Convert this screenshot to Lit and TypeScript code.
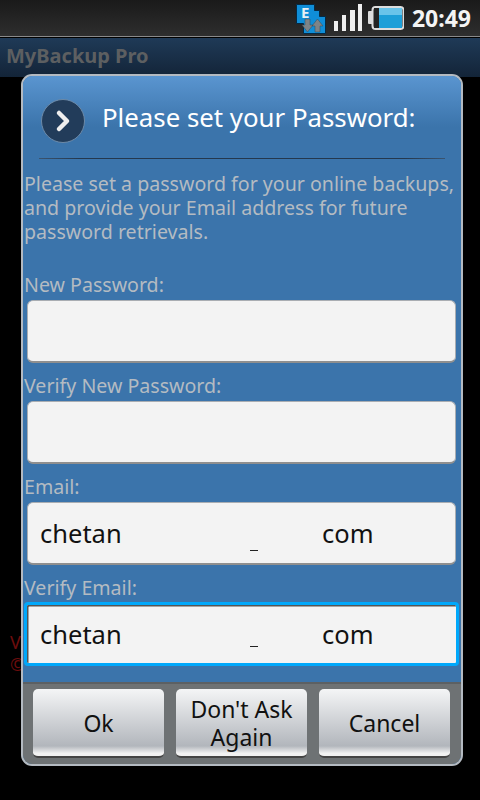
import { LitElement, html, css } from "lit";
import { customElement } from "lit/decorators.js";

@customElement("app-root")
export class AppRoot extends LitElement {
  static styles = css`
    :host { display: block; width: 480px; height: 800px; position: relative; overflow: hidden; background: #000; font-family: "Noto Sans", "Open Sans", sans-serif; }
    .status { height: 37px; box-sizing: border-box; background: linear-gradient(#1a1a1a, #2e2e2e); border-bottom: 1px solid #8a8a8a; display: flex; justify-content: flex-end; align-items: center; padding-right: 9px; }
    .status svg { display: block; flex: none; }
    .net { margin-right: 7px; }
    .sig { margin-right: 5px; }
    .time { color: #f4f4f4; font: bold 23px "Noto Sans", sans-serif; margin-left: 8px; margin-top: -1px; }
    .appbar { height: 39px; margin-top: 1px; background: linear-gradient(#1f3a57, #132438); color: #5d5f61; font-weight: bold; font-size: 20px; line-height: 36px; padding-left: 6px; }
    .behind { position: absolute; left: 10px; top: 631px; color: #6d0d0d; font-size: 18px; line-height: 22px; }
    .dialog { position: absolute; left: 21px; top: 74px; width: 442px; height: 692px; box-sizing: border-box; border: 2px solid #b4bac1; border-radius: 11px; overflow: hidden; background: #3b74ab; display: flex; flex-direction: column; }
    .head { height: 82px; flex: none; box-sizing: border-box; background: linear-gradient(#5a95d0, #3b74ab 62%); display: flex; align-items: center; padding: 7px 0 0 18px; gap: 17px; }
    .head span { color: #fff; font-size: 25.800px; margin-top: -7px; }
    .rule { flex: none; height: 1px; margin: 0 16px; background: linear-gradient(90deg, #3a5470, #24384e 10%, #24384e 90%, #3a5470); }
    .msg { flex: none; margin: 13px 0 0 1px; color: #b4bbc2; font-size: 19.600px; line-height: 24px; white-space: nowrap; height: 90px; }
    .fields { flex: 1; padding: 0 5px 0 4px; }
    label { display: block; color: #b4bbc2; font-size: 19.600px; height: 38px; line-height: 46px; margin-left: -3px; }
    .input { height: 63px; box-sizing: border-box; background: #f3f3f3; border-radius: 6px; border: 1px solid #a9adb2; border-bottom: 2px solid #8f8f8f; display: flex; align-items: center; padding: 0 12px; color: #111; font-size: 25.500px; position: relative; }
    .input .a { flex: none; width: 282px; }
    .input i { position: absolute; left: 222px; top: 47px; width: 8px; height: 1px; background: #222; }
    .focus { margin: -1px -3px 0; height: 64px; border: 3px solid #00a8fb; border-radius: 4px; background: #f3f3f3; box-shadow: inset 1.500px 1.500px 0 #555; padding: 0 13px; }
    .focus i { left: 223px; top: 41px; }
    .bar { flex: none; height: 82px; box-sizing: border-box; background: #6e7274; border-top: 2px solid #5c6063; display: flex; gap: 12px; padding: 5px 11px 0 10px; }
    .btn { flex: 1; height: 69px; box-sizing: border-box; border-radius: 5px; padding-top: 1px; background: linear-gradient(#f4f5f6, #b2b6bc 85%, #f2f2f2 96%); border-bottom: 2px solid #444; display: flex; align-items: center; justify-content: center; text-align: center; color: #111; font-size: 23px; line-height: 28px; }
  `;

  render() {
    return html`
      <div class="status">
        <svg class="net" width="31" height="31" viewBox="0 0 31 31">
          <path d="M.5 1.500h18v6h5v6h6v17h-22v-10h-7z" fill="#0f8ed8" stroke="#052a44" stroke-width="1"/>
          <text x="5" y="15" fill="#e8f0f4" font-family="Noto Sans" font-weight="bold" font-size="15">E</text>
          <path d="M9 16h5v6h3l-5.500 7-5.500-7h3zM24 29h-5v-6h-3l5.500-7 5.500 7h-3z" fill="#7d8488" stroke="#3b4a52" stroke-width=".5"/>
        </svg>
        <svg class="sig" width="29" height="28" viewBox="0 0 29 28">
          <rect x="0" y="17" width="4" height="10" fill="#eee"/>
          <rect x="8" y="11" width="4" height="16" fill="#eee"/>
          <rect x="16" y="6" width="5" height="21" fill="#eee"/>
          <rect x="24" y="0" width="4" height="27" fill="#eee"/>
        </svg>
        <svg width="36" height="24" viewBox="0 0 36 24">
          <rect x="0" y="5" width="5" height="13" rx="1" fill="#ddd"/>
          <rect x="4.500" y="1" width="31" height="22" rx="3" fill="#222" stroke="#ddd" stroke-width="2"/>
          <rect x="6" y="2" width="5" height="20" fill="#222"/>
          <rect x="11" y="2" width="23" height="20" fill="#1d9fd8"/>
          <rect x="11" y="2" width="23" height="7" fill="#69c4ea"/>
        </svg>
        <span class="time">20:49</span>
      </div>
      <div class="appbar">MyBackup Pro</div>
      <div class="behind">V<br />©</div>
      <div class="dialog">
        <div class="head">
          <svg width="44" height="44" viewBox="0 0 44 44">
            <circle cx="22" cy="22" r="21.500" fill="#223c5a" stroke="#6d8aa8" stroke-width="1"/>
            <path d="M18 14l8 8-8 8" fill="none" stroke="#eee" stroke-width="4.500" stroke-linecap="round" stroke-linejoin="round"/>
          </svg>
          <span>Please set your Password:</span>
        </div>
        <div class="rule"></div>
        <div class="msg">Please set a password for your online backups,<br />and provide your Email address for future<br />password retrievals.</div>
        <div class="fields">
          <label>New Password:</label>
          <div class="input"></div>
          <label>Verify New Password:</label>
          <div class="input"></div>
          <label>Email:</label>
          <div class="input"><span class="a">chetan</span><span>com</span><i></i></div>
          <label>Verify Email:</label>
          <div class="input focus"><span class="a">chetan</span><span>com</span><i></i></div>
        </div>
        <div class="bar">
          <div class="btn">Ok</div>
          <div class="btn">Don't Ask<br />Again</div>
          <div class="btn">Cancel</div>
        </div>
      </div>
    `;
  }
}
